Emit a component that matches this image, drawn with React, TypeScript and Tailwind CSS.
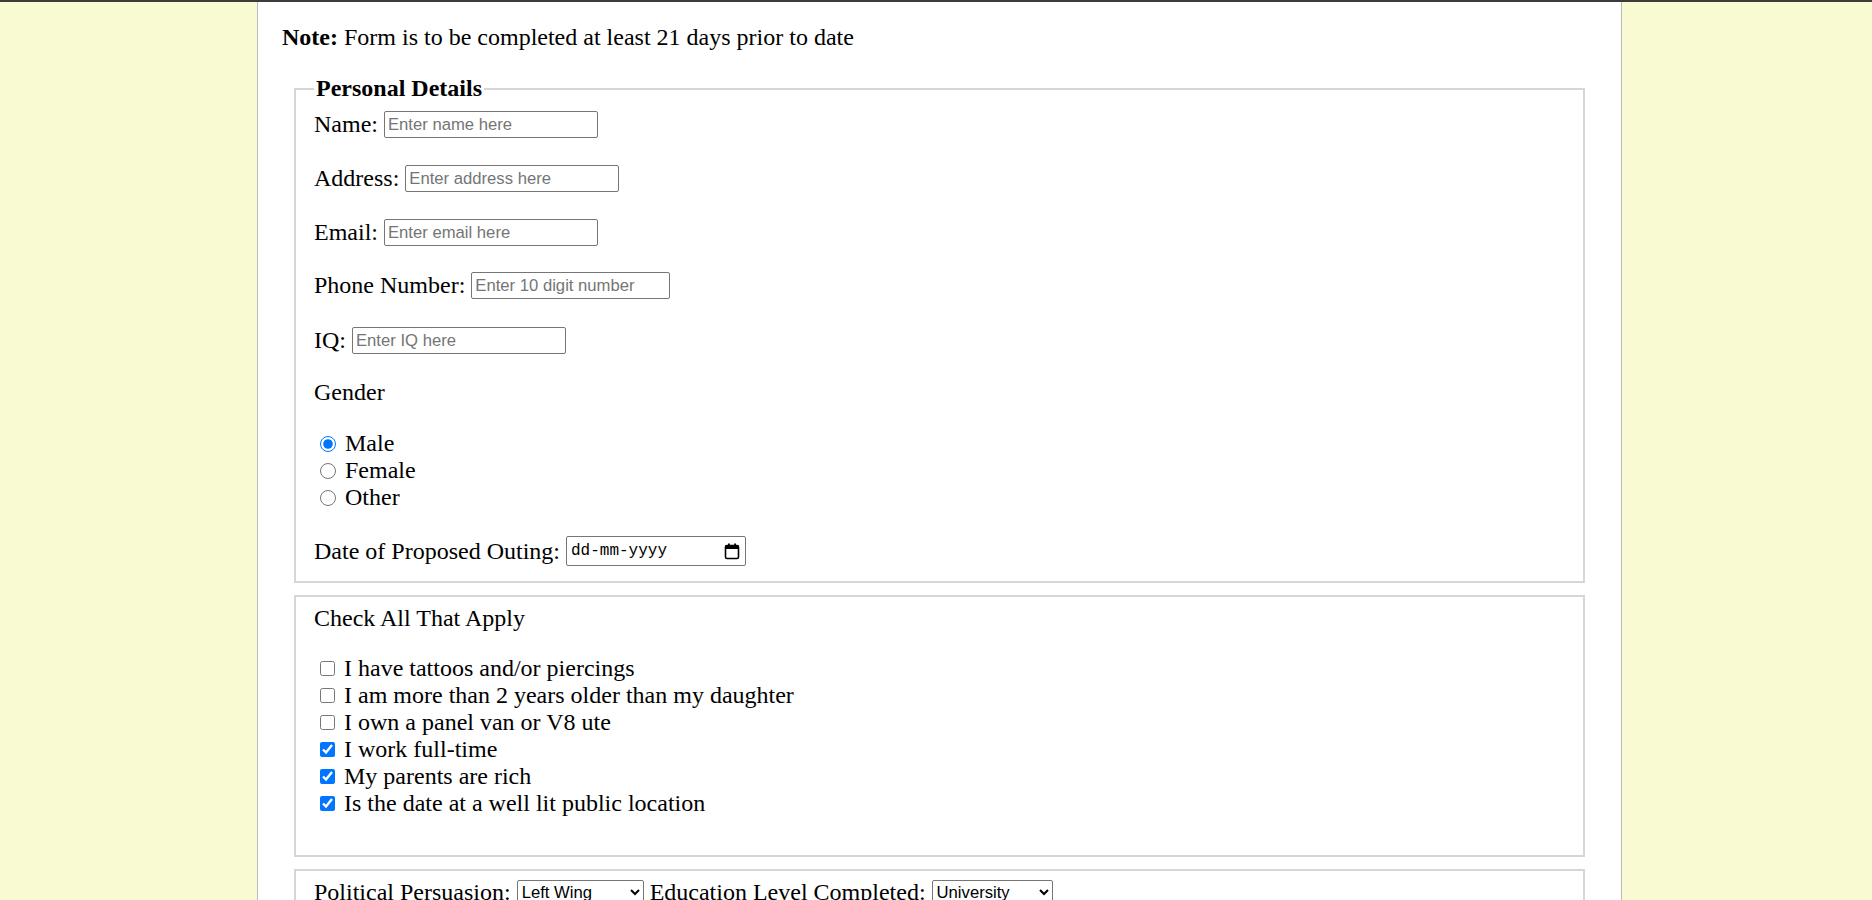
import React, { useState } from 'react';

const serif = { fontFamily: '"Liberation Serif", "Times New Roman", serif' };

const checks = [
  { id: 'tattoos', text: 'I have tattoos and/or piercings', checked: false },
  { id: 'older', text: 'I am more than 2 years older than my daughter', checked: false },
  { id: 'van', text: 'I own a panel van or V8 ute', checked: false },
  { id: 'work', text: 'I work full-time', checked: true },
  { id: 'rich', text: 'My parents are rich', checked: true },
  { id: 'lit', text: 'Is the date at a well lit public location', checked: true },
];

const inputCls =
  "ml-[6px] h-[27px] border border-[#767676] rounded-[2px] px-[3px] text-[16.67px] text-black placeholder:text-[#757575] font-['Liberation_Sans',Arial,sans-serif] bg-white outline-none";

const CalendarIcon = () => (
  <svg width="16" height="17" viewBox="0 0 16 17" fill="none">
    <rect x="1.5" y="2.5" width="13" height="13" rx="1.5" stroke="#000" strokeWidth="1.6" />
    <rect x="1.5" y="2.5" width="13" height="3.5" fill="#000" />
    <rect x="4" y="0.5" width="1.8" height="3" fill="#000" />
    <rect x="10.2" y="0.5" width="1.8" height="3" fill="#000" />
  </svg>
);

const App = () => {
  const [gender, setGender] = useState('male');
  const [ticks, setTicks] = useState<Record<string, boolean>>(
    Object.fromEntries(checks.map((c) => [c.id, c.checked]))
  );

  return (
    <div className="min-h-screen bg-[#fafad2] border-t-2 border-[#3c3c3c]" style={serif}>
      <div className="ml-[257px] w-[1365px] min-h-[1200px] bg-white border-x border-[#bcbcbc] px-[24px] pt-[22px] text-[24px] text-black leading-[27px]">
        <p className="mb-[24px]">
          <b>Note:</b> Form is to be completed at least 21 days prior to date
        </p>

        <form className="mx-[12px]">
          <fieldset className="border-2 border-[#d6d6d6] px-[18px] pt-[8px] pb-[15px]">
            <legend className="px-[2px] font-bold">Personal Details</legend>

            <div className="h-[28px] flex items-center">
              <label htmlFor="name">Name:</label>
              <input id="name" type="text" placeholder="Enter name here" className={`${inputCls} w-[214px]`} />
            </div>
            <div className="h-[28px] flex items-center mt-[26px]">
              <label htmlFor="address">Address:</label>
              <input id="address" type="text" placeholder="Enter address here" className={`${inputCls} w-[214px]`} />
            </div>
            <div className="h-[28px] flex items-center mt-[26px]">
              <label htmlFor="email">Email:</label>
              <input id="email" type="email" placeholder="Enter email here" className={`${inputCls} w-[214px]`} />
            </div>
            <div className="h-[28px] flex items-center mt-[25px]">
              <label htmlFor="phone">Phone Number:</label>
              <input id="phone" type="tel" placeholder="Enter 10 digit number" className={`${inputCls} w-[199px]`} />
            </div>
            <div className="h-[28px] flex items-center mt-[27px]">
              <label htmlFor="iq">IQ:</label>
              <input id="iq" type="number" placeholder="Enter IQ here" className={`${inputCls} w-[214px] [appearance:textfield]`} />
            </div>

            <div className="h-[28px] flex items-center mt-[24px]">Gender</div>

            <div className="mt-[24px]">
              {[
                ['male', 'Male'],
                ['female', 'Female'],
                ['other', 'Other'],
              ].map(([value, text]) => (
                <div key={value} className="h-[27px] flex items-center">
                  <input
                    type="radio"
                    name="gender"
                    id={value}
                    checked={gender === value}
                    onChange={() => setGender(value)}
                    className="ml-[6px] w-[16px] h-[16px] m-0"
                  />
                  <label htmlFor={value} className="ml-[9px]">{text}</label>
                </div>
              ))}
            </div>

            <div className="h-[30px] flex items-center mt-[25px]">
              <label htmlFor="date">Date of Proposed Outing:</label>
              <div
                id="date"
                className="ml-[6px] w-[180px] h-[30px] border border-[#767676] rounded-[2px] pl-[4px] pr-[5px] flex items-center justify-between bg-white"
              >
                <span className="text-[16px] leading-none font-['Liberation_Mono','DejaVu_Sans_Mono',monospace]">dd-mm-yyyy</span>
                <CalendarIcon />
              </div>
            </div>
          </fieldset>

          <fieldset className="mt-[12px] border-2 border-[#d6d6d6] px-[18px] pt-[7px] pb-[15px]">
            <div className="h-[28px] flex items-center">Check All That Apply</div>
            <div className="mt-[23px]">
              {checks.map((c) => (
                <div key={c.id} className="h-[27px] flex items-center">
                  <input
                    type="checkbox"
                    id={c.id}
                    checked={ticks[c.id]}
                    onChange={() => setTicks((prev) => ({ ...prev, [c.id]: !prev[c.id] }))}
                    className="ml-[6px] w-[15px] h-[15px] m-0"
                  />
                  <label htmlFor={c.id} className="ml-[9px]">{c.text}</label>
                </div>
              ))}
            </div>
            <div className="h-[23px]" />
          </fieldset>

          <fieldset className="mt-[12px] border-2 border-[#d6d6d6] px-[18px] pt-[7px] pb-[15px]">
            <div className="h-[28px] flex items-center">
              <label htmlFor="politics">Political Persuasion:</label>
              <select
                id="politics"
                defaultValue="left"
                className="ml-[6px] w-[127px] h-[24px] border border-[#767676] rounded-[2px] text-[16.67px] font-['Liberation_Sans',Arial,sans-serif] bg-white"
              >
                <option value="left">Left Wing</option>
                <option value="right">Right Wing</option>
                <option value="centre">Centre</option>
              </select>
              <label htmlFor="education" className="ml-[6px]">Education Level Completed:</label>
              <select
                id="education"
                defaultValue="uni"
                className="ml-[6px] w-[121px] h-[24px] border border-[#767676] rounded-[2px] text-[16.67px] font-['Liberation_Sans',Arial,sans-serif] bg-white"
              >
                <option value="school">High School</option>
                <option value="tafe">TAFE</option>
                <option value="uni">University</option>
              </select>
            </div>
          </fieldset>

          <div className="mt-[20px]">
            <button type="submit" className="border border-[#767676] rounded-[2px] bg-[#efefef] px-[8px] text-[16.67px] font-['Liberation_Sans',Arial,sans-serif]">
              Submit
            </button>
          </div>
        </form>
      </div>
    </div>
  );
};

export default App;
